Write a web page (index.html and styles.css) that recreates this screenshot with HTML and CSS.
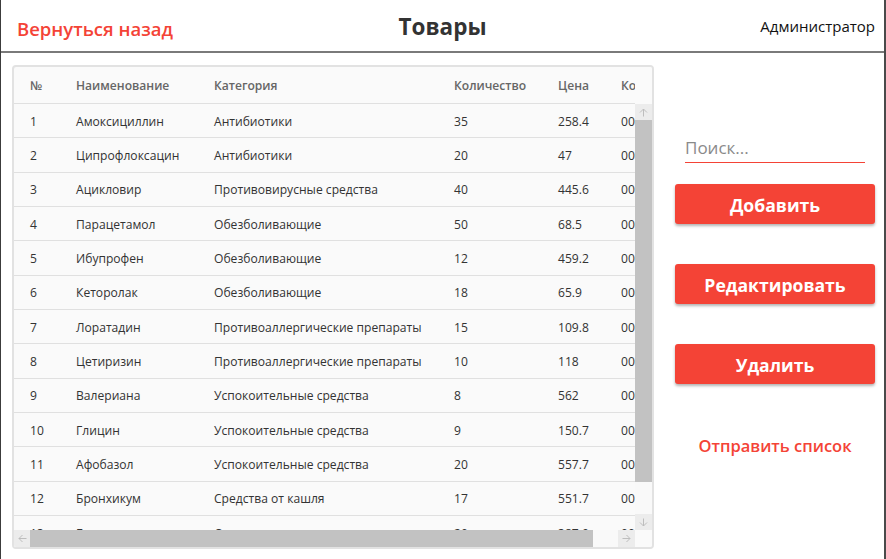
FILE: index.html
```html
<!DOCTYPE html>
<html lang="ru">
<head>
<meta charset="utf-8">
<title>Товары</title>
<link rel="stylesheet" href="styles.css">
</head>
<body>
<header class="topbar">
  <a class="back" href="#">Вернуться назад</a>
  <h1 class="title">Товары</h1>
  <span class="user">Администратор</span>
</header>
<main class="content">
  <section class="grid">
    <div class="grid-head">
      <div class="row head-row">
        <span>№</span><span>Наименование</span><span>Категория</span><span>Количество</span><span>Цена</span><span>Код</span>
      </div>
    </div>
    <div class="grid-corner"></div>
    <div class="grid-body">
      <div class="row"><span>1</span><span>Амоксициллин</span><span>Антибиотики</span><span>35</span><span>258.4</span><span>0001</span></div>
      <div class="row"><span>2</span><span>Ципрофлоксацин</span><span>Антибиотики</span><span>20</span><span>47</span><span>0002</span></div>
      <div class="row"><span>3</span><span>Ацикловир</span><span>Противовирусные средства</span><span>40</span><span>445.6</span><span>0003</span></div>
      <div class="row"><span>4</span><span>Парацетамол</span><span>Обезболивающие</span><span>50</span><span>68.5</span><span>0004</span></div>
      <div class="row"><span>5</span><span>Ибупрофен</span><span>Обезболивающие</span><span>12</span><span>459.2</span><span>0005</span></div>
      <div class="row"><span>6</span><span>Кеторолак</span><span>Обезболивающие</span><span>18</span><span>65.9</span><span>0006</span></div>
      <div class="row"><span>7</span><span>Лоратадин</span><span>Противоаллергические препараты</span><span>15</span><span>109.8</span><span>0007</span></div>
      <div class="row"><span>8</span><span>Цетиризин</span><span>Противоаллергические препараты</span><span>10</span><span>118</span><span>0008</span></div>
      <div class="row"><span>9</span><span>Валериана</span><span>Успокоительные средства</span><span>8</span><span>562</span><span>0009</span></div>
      <div class="row"><span>10</span><span>Глицин</span><span>Успокоительные средства</span><span>9</span><span>150.7</span><span>0010</span></div>
      <div class="row"><span>11</span><span>Афобазол</span><span>Успокоительные средства</span><span>20</span><span>557.7</span><span>0011</span></div>
      <div class="row"><span>12</span><span>Бронхикум</span><span>Средства от кашля</span><span>17</span><span>551.7</span><span>0012</span></div>
      <div class="row"><span>13</span><span>Бромгексин</span><span>Средства от кашля</span><span>20</span><span>387.9</span><span>0013</span></div>
      <div class="row"><span>14</span><span>Гербион</span><span>Средства от кашля</span><span>14</span><span>312.4</span><span>0014</span></div>
    </div>
    <div class="vscroll">
      <div class="sb-btn">
        <svg width="9" height="9" viewBox="0 0 9 9"><path d="M4.5 8.5V1M1 4.5l3.5-3.5 3.5 3.5" fill="none" stroke="#bdbdbd" stroke-width="1"/></svg>
      </div>
      <div class="sb-thumb-v"></div>
      <div class="sb-track"></div>
      <div class="sb-btn">
        <svg width="9" height="9" viewBox="0 0 9 9"><path d="M4.5 0.5V8M1 4.5l3.5 3.5 3.5-3.5" fill="none" stroke="#bdbdbd" stroke-width="1"/></svg>
      </div>
    </div>
    <div class="hscroll">
      <div class="sb-btn">
        <svg width="9" height="9" viewBox="0 0 9 9"><path d="M8.5 4.5H1M4.5 1L1 4.5 4.5 8" fill="none" stroke="#bdbdbd" stroke-width="1"/></svg>
      </div>
      <div class="sb-thumb-h"></div>
      <div class="sb-track"></div>
      <div class="sb-btn">
        <svg width="9" height="9" viewBox="0 0 9 9"><path d="M0.5 4.5H8M4.5 1L8 4.5 4.5 8" fill="none" stroke="#bdbdbd" stroke-width="1"/></svg>
      </div>
    </div>
    <div class="grid-corner"></div>
  </section>
  <aside class="side">
    <input class="search" type="text" placeholder="Поиск...">
    <button class="btn btn-add">Добавить</button>
    <button class="btn">Редактировать</button>
    <button class="btn">Удалить</button>
    <a class="send" href="#">Отправить список</a>
  </aside>
</main>
</body>
</html>
```
FILE: styles.css
```css
* { box-sizing: border-box; }
html, body { margin: 0; padding: 0; }
body {
  width: 886px;
  height: 559px;
  overflow: hidden;
  background: #fff;
  border-left: 1px solid #3c3c3c;
  border-right: 2px solid #4a4a4a;
  font-family: "Open Sans", "Noto Sans", sans-serif;
  color: #333;
  display: flex;
  flex-direction: column;
}
.topbar {
  height: 53px;
  flex: none;
  border-bottom: 2px solid #7a7a7a;
  display: grid;
  grid-template-columns: 1fr auto 1fr;
  align-items: center;
  padding: 0 8px;
}
.back {
  justify-self: start;
  margin-left: 8px;
  color: #f44336;
  font-size: 18.5px;
  font-weight: 600;
  text-decoration: none;
  padding-top: 5px;
}
.title {
  margin: 0;
  font-size: 22.5px;
  font-weight: 700;
  color: #333;
  padding-top: 1px;
}
.user {
  justify-self: end;
  margin-right: 1px;
  font-size: 15px;
  color: #111;
}
.content {
  flex: 1;
  display: flex;
  padding: 12px 0 10px 11px;
}
.grid {
  width: 642px;
  height: 484px;
  flex: none;
  border: 2px solid #e2e2e2;
  border-radius: 4px;
  background: #fafafa;
  display: grid;
  grid-template-columns: 621px 17px;
  grid-template-rows: 37px 426px 17px;
  overflow: hidden;
}
.grid-head, .grid-body {
  overflow: hidden;
}
.row {
  display: grid;
  grid-template-columns: 46px 138px 240px 104px 63px 80px;
  width: 671px;
  height: 34.35px;
  border-bottom: 1px solid #e0e0e0;
  align-items: center;
  font-size: 12.1px;
  color: #333;
  padding-top: 1px;
}
.row span {
  padding-left: 16px;
  white-space: nowrap;
}
.head-row {
  height: 37px;
  font-weight: 600;
  color: #666;
}
.vscroll {
  display: grid;
  grid-template-rows: 16px 362px 1fr 16px;
  background: #f9f9f9;
}
.hscroll {
  display: grid;
  grid-template-columns: 16px 563px 1fr 17px;
  background: #f9f9f9;
}
.sb-btn {
  background: #ececec;
  display: flex;
  align-items: center;
  justify-content: center;
}
.sb-thumb-v, .sb-thumb-h {
  background: #c2c2c2;
}
.sb-track { background: #f9f9f9; }
.grid-corner { background: #fafafa; }
.side {
  flex: none;
  width: 200px;
  margin-left: 21px;
  display: flex;
  flex-direction: column;
  align-items: center;
}
.search {
  margin-top: 72px;
  width: 180px;
  height: 26px;
  border: none;
  border-bottom: 1px solid #f44336;
  background: transparent;
  padding: 0 0 5px 0;
  font-family: inherit;
  font-size: 17px;
  color: #333;
  outline: none;
}
.search::placeholder { color: #8a8a8a; }
.btn {
  width: 200px;
  height: 40px;
  border: none;
  border-radius: 3px;
  background: #f44336;
  color: #fff;
  font-family: inherit;
  font-size: 17.6px;
  font-weight: 700;
  box-shadow: 0 2px 3px rgba(0,0,0,0.3);
  margin-top: 40px;
  padding: 2px 0 0 0;
}
.btn-add { margin-top: 21px; }
.send {
  margin-top: 50px;
  color: #f44336;
  font-size: 16.5px;
  font-weight: 600;
  text-decoration: none;
}
```
